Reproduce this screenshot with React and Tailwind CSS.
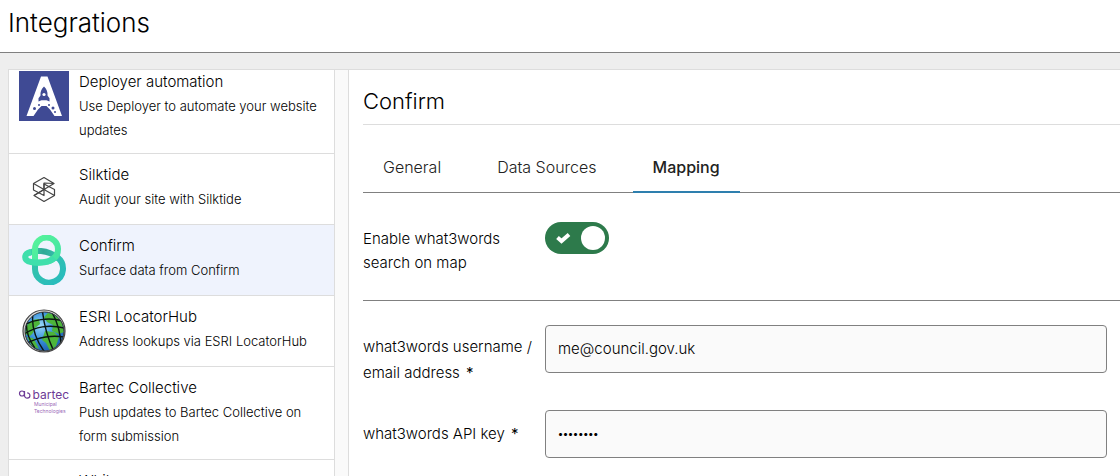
import React, { useState } from 'react';

const DeployerLogo = () => (
  <svg className="w-full h-full" viewBox="0 0 50 50">
    <rect width="50" height="50" fill="#3f4a94" />
    <path d="M22 5.500h6.500L43 45h-7.500L31 38.500 27.500 35h-5L19 38.500 14.500 45H7.500z" fill="#fff" />
    <path d="M25 15.500c-2.800 2.500-3.800 5.500-3.500 9l-2 2.700v3.300l3-1.200h5l3 1.200v-3.300l-2-2.700c.3-3.500-.7-6.500-3.500-9z" fill="#3f4a94" />
    <circle cx="25" cy="23.500" r="1.600" fill="#fff" />
    <g fill="#3f4a94">
      <circle cx="20" cy="34" r="1" />
      <circle cx="15.500" cy="37.500" r="1.500" />
      <circle cx="30" cy="34" r="1" />
      <circle cx="34" cy="37" r="1.500" />
      <circle cx="36" cy="41" r="1" />
    </g>
  </svg>
);

const SilktideLogo = () => (
  <svg className="w-full h-full" viewBox="0 0 50 50" fill="none" stroke="#444" strokeWidth="1.2" strokeLinejoin="round">
    <path d="M35 19.500 25 13.500 14.500 19.500V26L25 31.500V19z" />
    <path d="M15 31.500 25 37.500l10.500-6V25.500L25 20v5.500z" />
    <path d="M35 19.500 25 25.500 15 31.500M14.500 19.500 25 25.500l10.500 6" />
  </svg>
);

const ConfirmLogo = () => (
  <svg className="w-full h-full" viewBox="0 0 50 50" fill="none" strokeWidth="6">
    <defs>
      <linearGradient id="confirm-low" x1="0" y1="0" x2="1" y2="1">
        <stop offset="0" stopColor="#35c3a8" />
        <stop offset="1" stopColor="#27bbbf" />
      </linearGradient>
      <linearGradient id="confirm-top" x1="0" y1="0" x2="1" y2="1">
        <stop offset="0" stopColor="#56f39b" />
        <stop offset="1" stopColor="#43e3a4" />
      </linearGradient>
      <linearGradient id="confirm-back" x1="0" y1="0" x2="1" y2="0">
        <stop offset="0" stopColor="#3bdcaf" />
        <stop offset="0.5" stopColor="#2fa995" />
        <stop offset="1" stopColor="#35c3b0" />
      </linearGradient>
    </defs>
    <path d="M16 27v6a14 14 0 1 0 22.500-10.500" stroke="url(#confirm-low)" />
    <path d="M9 18.500c3-2 8-2.800 13-2.500 7 .5 13 3.500 17.500 7.500" stroke="url(#confirm-back)" />
    <path d="M16 27V14a11.500 11.500 0 0 1 23 0c0 10-9 13.500-21 13.500" stroke="url(#confirm-top)" />
    <path d="M12 17C4.500 18.500 4 25.500 12 27c9 1.800 19 .5 23.500-4" stroke="#3fdfac" />
  </svg>
);

const EsriLogo = () => (
  <svg className="w-full h-full" viewBox="0 0 50 50">
    <defs>
      <radialGradient id="esri-sea" cx="0.4" cy="0.35" r="0.7">
        <stop offset="0" stopColor="#9ad8fa" />
        <stop offset="0.5" stopColor="#3a93dc" />
        <stop offset="1" stopColor="#1a5cae" />
      </radialGradient>
      <clipPath id="esri-clip"><circle cx="25.500" cy="25.500" r="19.500" /></clipPath>
    </defs>
    <circle cx="25" cy="25" r="21" fill="#ddd" stroke="#444" strokeWidth="1.2" />
    <circle cx="25.500" cy="25.500" r="19.500" fill="url(#esri-sea)" />
    <g clipPath="url(#esri-clip)">
      <path d="M7 22c2-6 7-9 13-9l1 5-5 4-2 5-3 3-5-2zM29 7c6 1 11 5 14 10l2 9-5 2-7-3 1-6-6-3-3-5zM26 25l9 1 5 5-3 9-6 5-4-8-4-3zM8 31l6 1 3 5 3 6-7-3z" fill="#4db53a" />
      <g fill="none" stroke="#0a1612" strokeWidth="1.4" transform="rotate(-10 25 25)">
        <path d="M5 16c11-4 26-4 40 2M4 25c12-6 28-6 42 1M6 34c12-4 27-4 39 1" />
        <path d="M18 4c-5 12-3 27 4 42M27 4c-1 14 0 27 4 42M35 5c5 12 6 26 4 40M10 10c-3 10-2 20 3 30" />
      </g>
    </g>
    <circle cx="25.500" cy="25.500" r="19.500" fill="none" stroke="#333" strokeWidth="1" />
  </svg>
);

const BartecLogo = () => (
  <svg className="w-full h-full overflow-visible" viewBox="0 0 50 50" fontFamily="Inter, sans-serif">
    <g fill="none" stroke="#6d3a96" strokeWidth="1.2">
      <circle cx="3" cy="16.500" r="2.500" />
      <path d="M5.500 14v4.500a2.700 2.700 0 1 0 2.700-2.700" />
    </g>
    <text x="13.500" y="22" fontSize="12" fontWeight="400" fill="#6d3a96">bartec</text>
    <text x="15" y="29" fontSize="5" fontWeight="400" fill="#9a69b8">Municipal</text>
    <text x="15" y="35.500" fontSize="5" fontWeight="400" fill="#9a69b8">Technologies</text>
  </svg>
);

const INTEGRATIONS = [
  { name: 'Deployer automation', text: 'Use Deployer to automate your website updates', Logo: DeployerLogo },
  { name: 'Silktide', text: 'Audit your site with Silktide', Logo: SilktideLogo },
  { name: 'Confirm', text: 'Surface data from Confirm', Logo: ConfirmLogo },
  { name: 'ESRI LocatorHub', text: 'Address lookups via ESRI LocatorHub', Logo: EsriLogo },
  { name: 'Bartec Collective', text: 'Push updates to Bartec Collective on form submission', Logo: BartecLogo },
  { name: 'Whitespace', text: '', Logo: null },
];

const TABS = ['General', 'Data Sources', 'Mapping'];

const Required = () => <span className="ml-0.5 font-normal">*</span>;

const App = () => {
  const [selected, setSelected] = useState('Confirm');
  const [tab, setTab] = useState('Mapping');
  const [enabled, setEnabled] = useState(true);
  const [username, setUsername] = useState('me@council.gov.uk');
  const [apiKey, setApiKey] = useState('password');

  return (
    <div className="flex flex-col h-screen overflow-hidden bg-[#eee] font-['Inter',sans-serif] font-light text-black">
      <header className="shrink-0 px-2 pt-[3px] pb-[9px] bg-white border-b border-[#808080]">
        <h1 className="text-[26px] leading-10">Integrations</h1>
      </header>

      <div className="flex flex-1 min-h-0 mt-4 ml-2 bg-white border-t border-l border-[#ddd]">
        {/* Integration list */}
        <nav className="flex w-[340px] shrink-0 pr-[13px] overflow-hidden bg-[#fafafa] border-r border-[#ddd]">
          <ul className="flex-1 h-max bg-white border-r border-[#ddd]">
            {INTEGRATIONS.map(({ name, text, Logo }) => (
              <li key={name} className="group border-b border-[#ddd]">
                <button
                  onClick={() => setSelected(name)}
                  className={`flex w-full gap-2.5 p-2.5 group-first:pt-px text-left ${selected === name ? 'bg-[#eff3fd]' : 'bg-white'}`}
                >
                  <span className="w-[50px] h-[50px] shrink-0">{Logo && <Logo />}</span>
                  <span className="flex flex-col -mt-px mb-px pr-1">
                    <span className="text-[15px] leading-6">{name}</span>
                    <span className="text-[13px] leading-6">{text}</span>
                  </span>
                </button>
              </li>
            ))}
          </ul>
        </nav>

        {/* Settings for the selected integration */}
        <main className="flex-1 min-w-0 pl-3.5 overflow-hidden">
          <h2 className="pt-4 pb-2 text-[22px] leading-[30px] border-b border-[#ddd]">{selected}</h2>

          <div role="tablist" className="flex gap-4 mt-6 border-b border-[#808080]">
            {TABS.map(t => (
              <button
                key={t}
                role="tab"
                aria-selected={tab === t}
                onClick={() => setTab(t)}
                className={`-mb-px px-5 pt-1.5 pb-3 text-base leading-6 text-[#222] border-b-2 ${tab === t ? 'font-medium border-[#2e7fae]' : 'border-transparent'}`}
              >
                {t}
              </button>
            ))}
          </div>

          <div className="flex items-start pt-[29px] pb-[25px] border-b border-[#808080]">
            <label htmlFor="enable-search" className="w-[182px] shrink-0 pr-8 pt-[5px] text-[15px] leading-6">
              Enable what3words search on map
            </label>
            <span className="relative flex w-16 h-8">
              <input
                id="enable-search"
                type="checkbox"
                role="switch"
                checked={enabled}
                onChange={e => setEnabled(e.target.checked)}
                className="w-16 h-8 appearance-none rounded-full bg-[#808080] checked:bg-[#2d7a4b] cursor-pointer"
              />
              {enabled && (
                <svg className="absolute left-2.5 top-2.5 w-4 h-3 pointer-events-none" viewBox="0 0 16 12" fill="none" stroke="#fff" strokeWidth="4">
                  <path d="M2.500 5.500 6.500 9 14 2.500" />
                </svg>
              )}
              <span className={`absolute top-1 w-6 h-6 rounded-full bg-white pointer-events-none ${enabled ? 'right-1' : 'left-1'}`} />
            </span>
          </div>

          <div className="flex items-start pt-6 pr-[13px]">
            <label htmlFor="w3w-username" className="w-[182px] shrink-0 pt-[9px] text-[15px] leading-[26px]">
              what3words username / email address <Required />
            </label>
            <input
              id="w3w-username"
              type="text"
              value={username}
              onChange={e => setUsername(e.target.value)}
              className="flex-1 min-w-0 h-12 px-3 pb-0.5 text-[15px] bg-[#fafafa] border border-[#808080] rounded-sm"
            />
          </div>

          <div className="flex items-center pt-6 pr-[13px]">
            <label htmlFor="w3w-key" className="w-[182px] shrink-0 text-[15px] leading-6">
              what3words API key <Required />
            </label>
            <input
              id="w3w-key"
              type="password"
              value={apiKey}
              onChange={e => setApiKey(e.target.value)}
              className="flex-1 min-w-0 h-12 px-3 pb-0.5 text-[10px] font-semibold bg-[#fafafa] border border-[#808080] rounded-sm"
            />
          </div>
        </main>
      </div>
    </div>
  );
};

export default App;
